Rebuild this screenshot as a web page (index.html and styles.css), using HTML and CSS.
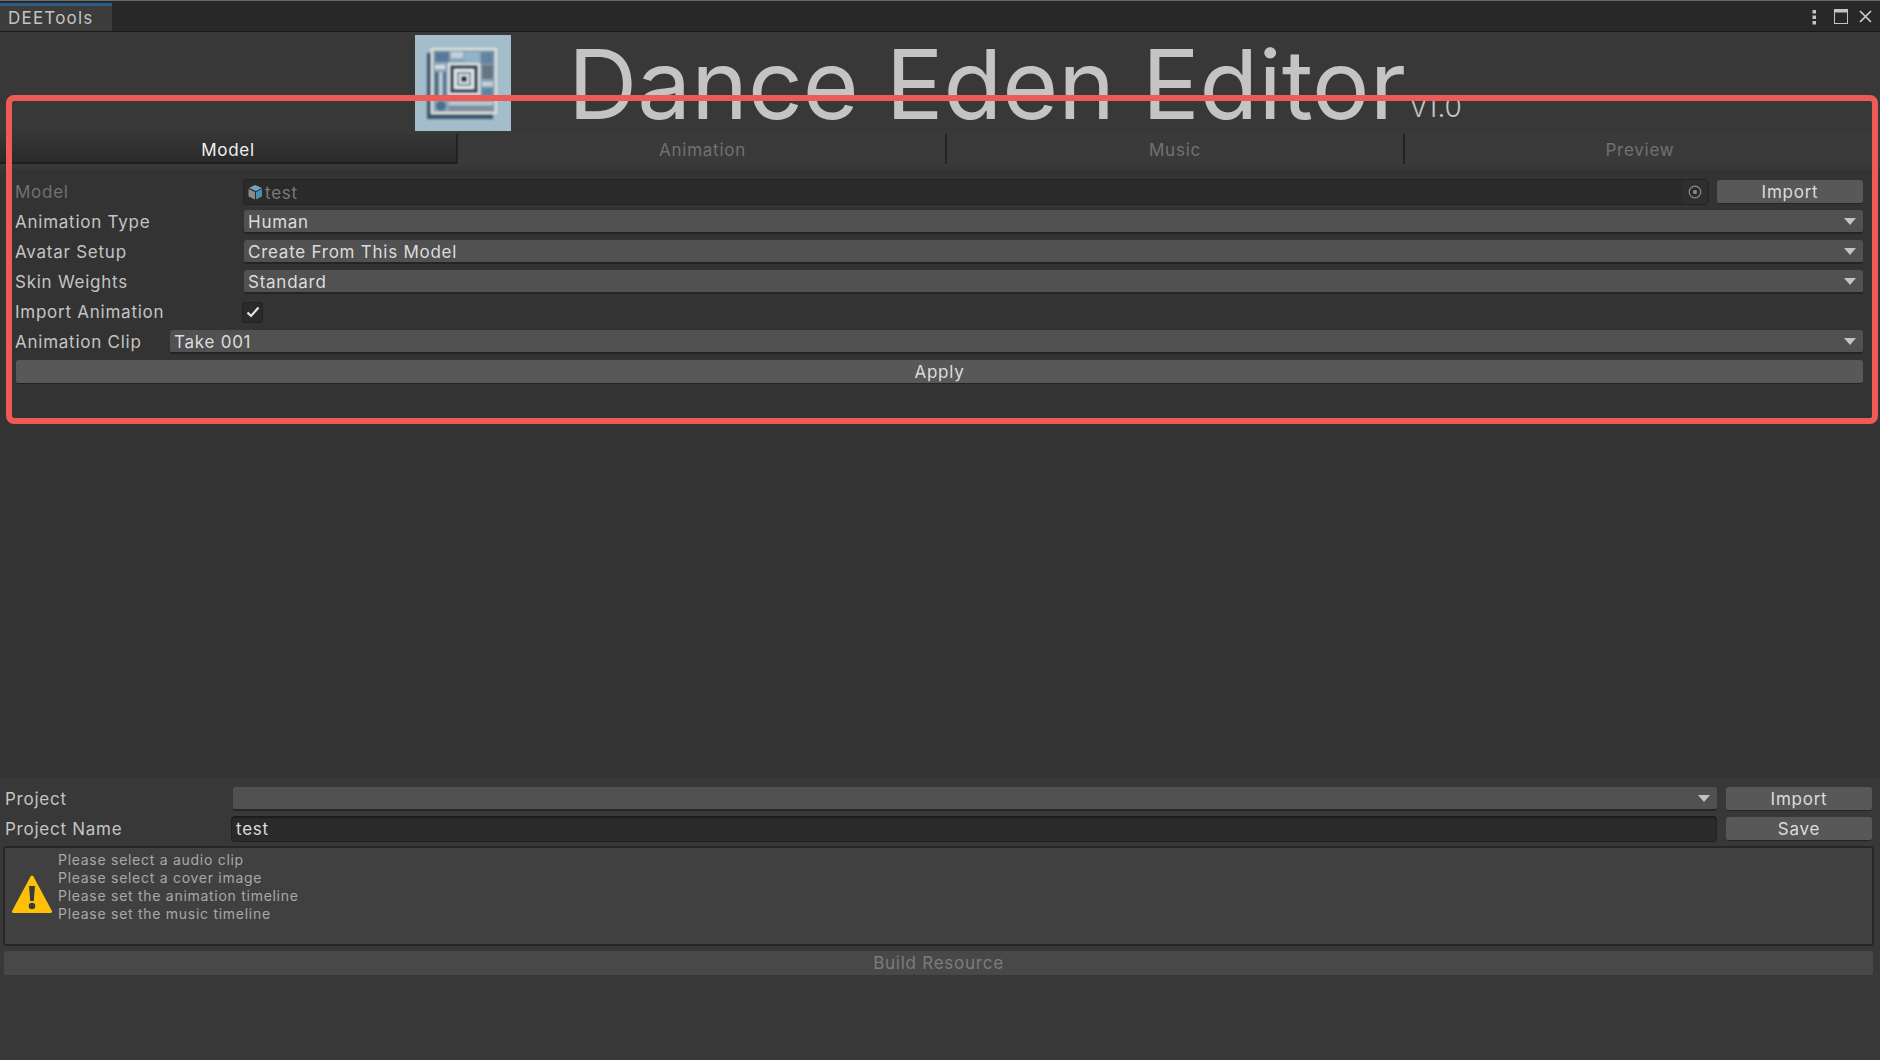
FILE: index.html
```html
<!DOCTYPE html>
<html lang="en">
<head>
    <meta charset="UTF-8">
    <title>DEETools</title>
    <link rel="stylesheet" href="styles.css">
</head>
<body>
    <div class="window">
        <div class="tabbar">
            <div class="dock-tab">DEETools</div>
            <div class="win-icons">
                <svg class="icon-menu" width="5" height="16" viewBox="0 0 5 16"><rect x="0.500" y="1" width="3.500" height="3.500" fill="#c4c4c4"/><rect x="0.500" y="6.500" width="3.500" height="3.500" fill="#c4c4c4"/><rect x="0.500" y="12" width="3.500" height="3.500" fill="#c4c4c4"/></svg>
                <svg class="icon-max" width="14" height="15" viewBox="0 0 14 15"><rect x="0.500" y="0.500" width="13" height="14" fill="none" stroke="#c4c4c4" stroke-width="1"/><rect x="0" y="0" width="14" height="3.500" fill="#c4c4c4"/></svg>
                <svg width="13" height="13" viewBox="0 0 13 13"><path d="M1 1 L12 12 M12 1 L1 12" stroke="#d0d0d0" stroke-width="1.600" fill="none"/></svg>
            </div>
        </div>

        <div class="header">
            <svg class="logo" width="96" height="96" viewBox="0 0 96 96">
                <defs><filter id="soft"><feGaussianBlur stdDeviation="0.900"/></filter></defs>
                <rect width="96" height="96" fill="#a3bdca"/>
                <g filter="url(#soft)">
                    <rect x="12" y="18" width="66" height="66" fill="#2a4560" opacity="0.850"/>
                    <rect x="16" y="13" width="66" height="66" fill="#e4e6df"/>
                    <rect x="18" y="15" width="62" height="62" fill="#8aa5b8"/>
                    <rect x="20" y="17" width="14" height="10" fill="#56799a"/>
                    <rect x="36" y="17" width="12" height="6" fill="#c3d0d6"/>
                    <rect x="50" y="17" width="14" height="10" fill="#8fb4cc"/>
                    <rect x="66" y="17" width="12" height="12" fill="#64849f"/>
                    <rect x="20" y="30" width="10" height="4" fill="#d5dcdc"/>
                    <rect x="20" y="37" width="3" height="28" fill="#41617e"/>
                    <rect x="25" y="37" width="2" height="28" fill="#cdd6d8"/>
                    <rect x="28" y="37" width="3" height="28" fill="#4f7290"/>
                    <rect x="67" y="30" width="11" height="14" fill="#66757f"/>
                    <rect x="67" y="47" width="11" height="4" fill="#c6d2d8"/>
                    <rect x="67" y="53" width="11" height="12" fill="#5a86a6"/>
                    <circle cx="26" cy="71" r="5" fill="#4a6f8c"/>
                    <rect x="34" y="67" width="44" height="3" fill="#c1cbd0"/>
                    <rect x="34" y="71" width="44" height="5" fill="#808f9c"/>
                    <rect x="33" y="28" width="32" height="32" fill="#e6e9e4"/>
                    <rect x="35" y="30" width="28" height="28" fill="#2e4c68"/>
                    <rect x="39" y="34" width="20" height="20" fill="#e4e8e3"/>
                    <rect x="42" y="37" width="14" height="14" fill="#5d7f9c"/>
                    <rect x="44" y="39" width="10" height="10" fill="#e6e9e4"/>
                    <rect x="46" y="41" width="6" height="6" fill="#22374c"/>
                </g>
            </svg>
            <span class="title">Dance Eden Editor</span>
            <span class="version">v1.0</span>
        </div>

        <div class="tool-tabs">
            <div class="tool-tab tab-model active">Model</div>
            <div class="tool-tab tab-anim">Animation</div>
            <div class="tool-tab tab-music">Music</div>
            <div class="tool-tab tab-preview">Preview</div>
        </div>

        <div class="main">
            <div class="form">
                <div class="row">
                    <div class="label dim">Model</div>
                    <div class="object-field">
                        <svg width="16" height="16" viewBox="0 0 16 16"><path d="M8 1 L15 4 L9 7 L2 4 Z" fill="#6fa5c4"/><path d="M1.500 5 L8 8 V15.500 L1.500 12.500 Z" fill="#8b8b8b"/><path d="M9 8 L15 5 V12.500 L9 15.500 Z" fill="#4d8bb0"/></svg>
                        <span class="field-text">test</span>
                        <div class="picker"><svg width="14" height="14" viewBox="0 0 14 14"><circle cx="7" cy="7" r="5.800" fill="none" stroke="#8c8c8c" stroke-width="1.200"/><circle cx="7" cy="7" r="2" fill="#8c8c8c"/></svg></div>
                    </div>
                    <div class="btn btn-import">Import</div>
                </div>
                <div class="row">
                    <div class="label">Animation Type</div>
                    <div class="dropdown">Human<i class="arrow"></i></div>
                </div>
                <div class="row">
                    <div class="label">Avatar Setup</div>
                    <div class="dropdown">Create From This Model<i class="arrow"></i></div>
                </div>
                <div class="row">
                    <div class="label">Skin Weights</div>
                    <div class="dropdown">Standard<i class="arrow"></i></div>
                </div>
                <div class="row">
                    <div class="label label-check">Import Animation</div>
                    <div class="checkbox"><svg width="14" height="12" viewBox="0 0 14 12"><path d="M1.500 6.500 L5 10 L12.500 1.500" fill="none" stroke="#e4e4e4" stroke-width="2.200"/></svg></div>
                </div>
                <div class="row">
                    <div class="label label-short">Animation Clip</div>
                    <div class="dropdown">Take 001<i class="arrow"></i></div>
                </div>
                <div class="row">
                    <div class="btn btn-wide">Apply</div>
                </div>
            </div>
        </div>

        <div class="footer">
            <div class="row">
                <div class="label label-foot">Project</div>
                <div class="dropdown"><i class="arrow"></i></div>
                <div class="btn btn-foot">Import</div>
            </div>
            <div class="row">
                <div class="label label-name">Project Name</div>
                <div class="text-field">test</div>
                <div class="btn btn-foot">Save</div>
            </div>
            <div class="help-box">
                <svg class="warn" width="40" height="40" viewBox="0 0 40 40">
                    <path d="M20 3 L38.500 37.500 H1.500 Z" fill="#ffc107" stroke="#ffc107" stroke-width="3" stroke-linejoin="round"/>
                    <path d="M17 12 H23 L21.800 27 H18.200 Z" fill="#3a3a3a"/>
                    <circle cx="20" cy="32" r="3.300" fill="#3a3a3a"/>
                </svg>
                <div class="help-text">
                    <div>Please select a audio clip</div>
                    <div>Please select a cover image</div>
                    <div>Please set the animation timeline</div>
                    <div>Please set the music timeline</div>
                </div>
            </div>
            <div class="btn-build">Build Resource</div>
        </div>

        <div class="highlight"></div>
    </div>
</body>
</html>
```

FILE: styles.css
```css
body {
    margin: 0;
    background-color: #333333;
    font-family: Inter, 'Liberation Sans', sans-serif;
    font-size: 17px;
    color: #c4c4c4;
    letter-spacing: 0.75px;
}
.window {
    position: relative;
    width: 1880px;
    height: 1060px;
    display: flex;
    flex-direction: column;
    overflow: hidden;
}
.tabbar {
    height: 32px;
    box-sizing: border-box;
    background-color: #282828;
    border-top: 1px solid #6a6a6a;
    border-bottom: 1px solid #1a1a1a;
    padding-top: 2px;
    display: flex;
    justify-content: space-between;
}
.dock-tab {
    width: 112px;
    box-sizing: border-box;
    background-color: #3c3c3c;
    border-top: 3px solid #2c5d87;
    padding-left: 8px;
    line-height: 25px;
    letter-spacing: 1.2px;
}
.win-icons {
    display: flex;
    align-items: center;
    padding: 0 8px 1px 0;
}
.icon-max {
    margin: 0 11px 0 17px;
}
.header {
    height: 102px;
    background-color: #383838;
    display: flex;
    padding-left: 415px;
}
.logo {
    margin-top: 3px;
}
.title {
    margin-left: 57px;
    font-size: 96px;
    font-weight: 400;
    line-height: 96px;
    margin-top: 4px;
    letter-spacing: 0;
    white-space: nowrap;
}
.version {
    margin-left: 5px;
    margin-top: 60px;
    font-size: 28px;
    font-weight: 300;
    line-height: 30px;
    letter-spacing: 0;
}
.tool-tabs {
    height: 36px;
    box-sizing: border-box;
    padding-bottom: 6px;
    display: flex;
    background: linear-gradient(#3a3a3a 80%, #363636);
}
.tool-tab {
    box-sizing: border-box;
    text-align: center;
    line-height: 32px;
    color: #717171;
    border-right: 2px solid #232323;
}
.tab-model { width: 458px; }
.tab-anim { width: 489px; padding-left: 2px; }
.tab-music { width: 458px; }
.tab-preview { flex: 1; border-right: none; padding-right: 5px; }
.tool-tab.active {
    background: linear-gradient(#363636, #2a2a2a);
    border-bottom: 2px solid #1f1f1f;
    color: #f0f0f0;
}
.main {
    flex: 1;
    background-color: #333333;
}
.form {
    padding: 10px 17px 0 15px;
    display: flex;
    flex-direction: column;
    gap: 6px;
}
.row {
    display: flex;
    align-items: center;
    height: 24px;
}
.label {
    width: 229px;
    flex-shrink: 0;
    line-height: 24px;
}
.label-short {
    width: 155px;
}
.label-check {
    width: 227px;
}
.dim {
    color: #717171;
}
.object-field {
    flex: 1;
    height: 26px;
    margin-left: -1px;
    box-sizing: border-box;
    background-color: #2a2a2a;
    border: 1px solid #232323;
    border-radius: 4px;
    display: flex;
    align-items: center;
    padding-left: 3px;
    gap: 2px;
    color: #7a7a7a;
}
.field-text {
    flex: 1;
    padding-top: 1px;
}
.picker {
    width: 26px;
    height: 24px;
    background-color: #2e2e2e;
    display: flex;
    align-items: center;
    justify-content: center;
}
.btn {
    height: 24px;
    box-sizing: border-box;
    background-color: #585858;
    border-radius: 3px;
    border-bottom: 1px solid #242424;
    color: #dcdcdc;
    text-align: center;
    line-height: 25px;
}
.btn-import {
    width: 146px;
    margin-left: 8px;
}
.btn-wide {
    flex: 1;
    margin-left: 1px;
}
.dropdown {
    position: relative;
    flex: 1;
    height: 24px;
    box-sizing: border-box;
    background-color: #515151;
    border-radius: 3px;
    border-bottom: 2px solid #242424;
    padding-left: 4px;
    color: #dcdcdc;
    line-height: 25px;
}
.arrow {
    position: absolute;
    right: 7px;
    top: 8px;
    width: 0;
    height: 0;
    border-left: 6px solid transparent;
    border-right: 6px solid transparent;
    border-top: 7px solid #c4c4c4;
}
.checkbox {
    width: 21px;
    height: 21px;
    box-sizing: border-box;
    background-color: #2a2a2a;
    border: 1px solid #212121;
    border-radius: 3px;
    display: flex;
    align-items: center;
    justify-content: center;
}
.footer {
    height: 282px;
    box-sizing: border-box;
    background-color: #383838;
    padding: 9px 8px 0 4px;
    display: flex;
    flex-direction: column;
    gap: 5px;
}
.footer .row + .row {
    margin-top: 1px;
}
.label-foot {
    width: 228px;
    padding-left: 1px;
}
.label-name {
    width: 226px;
    padding-left: 1px;
}
.text-field {
    flex: 1;
    height: 26px;
    box-sizing: border-box;
    background-color: #2a2a2a;
    border: 1px solid #212121;
    border-top: 2px solid #1c1c1c;
    border-radius: 4px;
    padding-left: 4px;
    color: #dcdcdc;
    line-height: 22px;
}
.btn-foot {
    width: 146px;
    margin-left: 9px;
}
.help-box {
    height: 100px;
    margin: 0 -2px 0 -1px;
    box-sizing: border-box;
    background-color: #404040;
    border: 2px solid #262626;
    border-radius: 3px;
    display: flex;
    align-items: flex-start;
    padding: 3px 0 0 7px;
    gap: 6px;
    font-size: 14px;
    line-height: 18px;
    letter-spacing: 0.72px;
    color: #a8a8a8;
}
.warn {
    margin-top: 23px;
}
.btn-build {
    height: 24px;
    margin-right: -1px;
    background-color: #484848;
    border-radius: 2px;
    color: #7c7c7c;
    text-align: center;
    line-height: 25px;
}
.highlight {
    position: absolute;
    left: 6px;
    top: 95px;
    width: 1872px;
    height: 329px;
    box-sizing: border-box;
    border: 6px solid #ee5b57;
    border-radius: 8px;
}
```
